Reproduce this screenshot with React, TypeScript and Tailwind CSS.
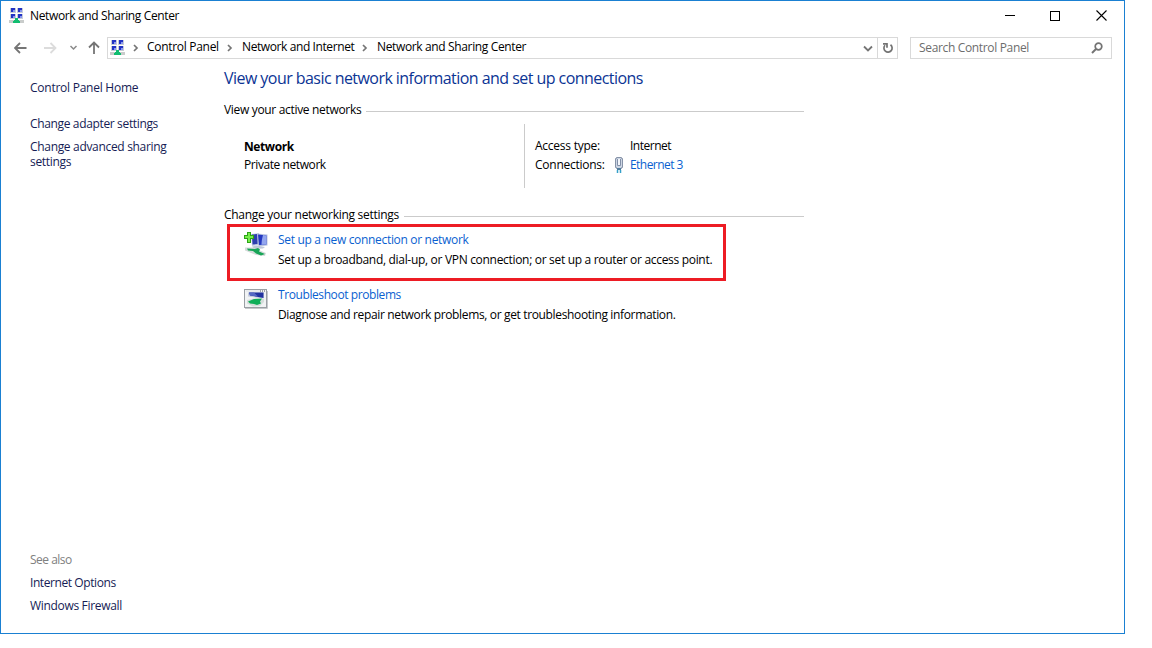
import type { ReactNode } from "react";

function NetworkIcon() {
  return (
    <svg width="16" height="16" viewBox="0 0 16 16" className="shrink-0">
      {[[1, 0], [8, 0], [1, 6], [8, 6]].map(([x, y]) => (
        <g key={`${x}-${y}`}>
          <rect x={x} y={y} width="6" height="5" fill="#c9cdd6" />
          <rect x={x + 1} y={y} width="4" height="4" fill="#2233c4" />
          <rect x={x + 3} y={y + 2} width="2" height="2" fill="#8797ee" />
        </g>
      ))}
      <rect x="0" y="12" width="15" height="3" fill="#c9cccb" />
      <path d="M6 10h3v2h1v1h1v2H4v-2h1v-1h1z" fill="#11bd70" />
    </svg>
  );
}

function Chevron({ className = "" }: { className?: string }) {
  return (
    <svg width="6" height="8" viewBox="0 0 6 8" className={`shrink-0 ${className}`}>
      <path d="M1 1l3 3-3 3" fill="none" stroke="#757575" strokeWidth="1.7" />
    </svg>
  );
}

function SetupIcon() {
  return (
    <svg width="26" height="26" viewBox="0 0 26 26" className="shrink-0">
      <path d="M8 3l8-1v12l-7 1z" fill="#c3cce2" />
      <path d="M9 3.500l5.500-.5v10l-5 .5z" fill="#2c3ead" />
      <path d="M14 2.500l10.500 1v11l-9 1z" fill="#b9c4df" />
      <path d="M15 3.500l8.500 1v9l-7.500.5z" fill="#2438c0" />
      <path d="M20 4.100l3.500.4v9l-5 .3c0-3 .5-6 1.500-9.700z" fill="#93a6ee" />
      <path d="M9 15.500l5-1 8 1.500-2 1.500-9 .5z" fill="#bfc8d8" />
      <path d="M2 16.500l8 0 13 5.500-1 3-9-1-11-4.500z" fill="#d5dbda" />
      <path d="M4 17.500l8 .5 3-1 2 1.500-1 2 6 2.500-4 1.500-5-2-3-2.500-5-.5z" fill="#18a557" />
      <path d="M4 1h4v3h3v4H8v4H4V8H1V4h3z" fill="#2da415" />
      <path d="M5 2h2v3h3v2H7v4H5V7H2V5h3z" fill="#76ed4c" />
    </svg>
  );
}

function TroubleshootIcon() {
  return (
    <svg width="24" height="20" viewBox="0 0 24 20">
      <rect x=".5" y=".5" width="22" height="18" fill="#f1f3f4" stroke="#9a9fa4" />
      <path d="M1 19.5h22.5V2" fill="none" stroke="#c6c9cc" />
      <path d="M2 2h14" stroke="#dfe2e5" />
      <path d="M16 2h1M18 2h1M20 2h1" stroke="#4d535c" />
      <path d="M4 3.500h16l-.5 6L4 7.500z" fill="#c6cede" />
      <path d="M5 3.500h14.500v5.500L6 6.500z" fill="#22339f" />
      <path d="M5 3.500h5l4 4-8-1z" fill="#5468c4" />
      <path d="M3 11l7-1.500 10 .5v3l-4 4-7 .5-6-3z" fill="#d5dddb" />
      <path d="M4 12.500l6-2.500 8-.5-2 3 1 2-4 1.500-3-1-4-.5z" fill="#0fae58" />
    </svg>
  );
}

function EthernetIcon() {
  return (
    <svg width="10" height="16" viewBox="0 0 10 16">
      <path d="M1.5 1.5h1v-1h5v1h1v9h-1v1h-5v-1h-1z" fill="#cdd6e4" stroke="#8693a8" />
      <path d="M3.5 2v6.500h3V2" fill="#f3f6fb" stroke="#8390a8" />
      <path d="M3 11h4v2H3z" fill="#517d9c" />
      <path d="M3.500 13v3M6.500 13v3" stroke="#36a0c9" strokeWidth="1.500" />
    </svg>
  );
}

function SectionTitle({ children }: { children: ReactNode }) {
  return (
    <div className="flex h-4 w-[580px] items-center">
      <span>{children}</span>
      <span className="mt-[3px] ml-[5px] h-px flex-1 bg-[#cbcbcb]" />
    </div>
  );
}

function TitleBar() {
  return (
    <header className="flex h-[30px] items-center pl-2">
      <NetworkIcon />
      <span className="ml-[5px] tracking-[-0.36px]">Network and Sharing Center</span>
      <div className="mr-[17px] mb-px ml-auto flex items-center">
        <svg width="10" height="11" viewBox="0 0 10 11" shapeRendering="crispEdges">
          <path d="M0 5.500h10" stroke="#000" />
        </svg>
        <svg width="10" height="10" viewBox="0 0 10 10" className="ml-[35px]" shapeRendering="crispEdges">
          <rect x=".5" y=".5" width="9" height="9" fill="none" stroke="#000" />
        </svg>
        <svg width="11" height="11" viewBox="0 0 11 11" className="ml-[36px]">
          <path d="M.5.5l10 10M10.500.5l-10 10" stroke="#000" strokeWidth="1.1" />
        </svg>
      </div>
    </header>
  );
}

function AddressBar() {
  return (
    <nav className="flex h-[34px] items-center pl-[13px]">
      <svg width="88" height="16" viewBox="0 0 88 16" fill="none" strokeWidth="1.8">
        <path d="M12.500 8H1M6 3L1 8l5 5" stroke="#757575" />
        <path d="M30 8h11.500M36.500 3l5 5-5 5" stroke="#dcdcdc" />
        <path d="M56.500 6l3 3 3-3" stroke="#8a8a8a" strokeWidth="1.500" />
        <path d="M80 14V2.500M75 7.500l5-5 5 5" stroke="#757575" />
      </svg>
      <div className="ml-[5px] flex h-[22px] w-[791px] items-center border border-[#d9d9d9] pl-[2px] tracking-[-0.36px] whitespace-nowrap">
        <NetworkIcon />
        <Chevron className="ml-[7px]" />
        <span className="mb-[2px] ml-2 w-[73px] tracking-[-0.3px]">Control Panel</span>
        <Chevron className="ml-[7px]" />
        <span className="mb-[2px] ml-[9px] w-[113px] tracking-[-0.4px]">Network and Internet</span>
        <Chevron className="ml-[7px]" />
        <span className="mb-[2px] ml-[9px]">Network and Sharing Center</span>
        <svg width="10" height="8" viewBox="0 0 10 8" className="mt-[2px] mr-[4px] ml-auto">
          <path d="M1 1.500l4 4 4-4" fill="none" stroke="#757575" strokeWidth="1.800" />
        </svg>
        <div className="flex h-full w-5 items-center justify-center border-l border-[#d9d9d9]">
          <svg width="12" height="12" viewBox="0 0 12 12" fill="none" stroke="#737373" strokeWidth="1.700">
            <path d="M8.500 2.800A4.100 4.100 0 1 1 3 3.300" />
            <path d="M1 1.800h4v4" />
          </svg>
        </div>
      </div>
      <div className="ml-3 flex h-[22px] w-[202px] items-center justify-between border border-[#d9d9d9] pr-2 pl-2 text-[#6d6d6d]">
        <span className="tracking-[-0.34px]">Search Control Panel</span>
        <svg width="12" height="12" viewBox="0 0 12 12" fill="none" stroke="#737373">
          <circle cx="7.500" cy="4.500" r="3.300" strokeWidth="1.700" />
          <path d="M5 7l-4 4" strokeWidth="2" />
        </svg>
      </div>
    </nav>
  );
}

function Sidebar() {
  return (
    <aside className="flex w-[223px] flex-col pt-[15px] pb-[19px] pl-[29px] text-[#151c55]">
      <a className="tracking-[-0.25px]">Control Panel Home</a>
      <a className="mt-5 tracking-[-0.35px]">Change adapter settings</a>
      <a className="mt-[7px] w-[150px] leading-[15px]">Change advanced sharing settings</a>
      <div className="mt-auto flex flex-col gap-[7px]">
        <span className="tracking-[-0.5px] text-[#808080]">See also</span>
        <a className="tracking-[-0.42px]">Internet Options</a>
        <a>Windows Firewall</a>
      </div>
    </aside>
  );
}

function Content() {
  return (
    <main className="pt-[3px]">
      <h1 className="h-5 text-[16px] leading-5 tracking-[-0.55px] whitespace-nowrap text-[#0b3494]">
        View your basic network information and set up connections
      </h1>
      <div className="mt-[14px]">
        <SectionTitle>View your active networks</SectionTitle>
      </div>
      <section className="mt-[6px] flex h-16 pl-5">
        <div className="w-[280px] pt-[14px]">
          <div className="h-[18px] leading-[18px] font-bold tracking-[-0.4px]">Network</div>
          <div className="h-[18px] leading-[18px] tracking-[-0.42px]">Private network</div>
        </div>
        <div className="border-l border-[#cbcbcb] pt-3 pl-[10px]">
          <div className="flex h-[19px] items-center">
            <span className="w-[95px] tracking-[-0.25px]">Access type:</span>
            <span className="tracking-[-0.5px]">Internet</span>
          </div>
          <div className="flex h-[19px] items-center">
            <span className="w-[79px] tracking-[-0.25px]">Connections:</span>
            <EthernetIcon />
            <a className="ml-[6px] tracking-[-0.55px] text-[#0a5fd0]">Ethernet 3</a>
          </div>
        </div>
      </section>
      <div className="mt-[19px] tracking-[-0.28px]">
        <SectionTitle>Change your networking settings</SectionTitle>
      </div>
      <section className="mt-[1px] ml-[3px] flex h-[57px] w-[499px] border-[3px] border-[#ed1c24] pt-1 pl-[13px]">
        <SetupIcon />
        <div className="ml-[9px] pt-px">
          <a className="block text-[#0a5fd0]">Set up a new connection or network</a>
          <p className="mt-1 tracking-[-0.31px] whitespace-nowrap">
            Set up a broadband, dial-up, or VPN connection; or set up a router or access point.
          </p>
        </div>
      </section>
      <section className="mt-[6px] flex pl-5">
        <div className="w-[34px] pt-[2px]">
          <TroubleshootIcon />
        </div>
        <div>
          <a className="block tracking-[-0.41px] text-[#0a5fd0]">Troubleshoot problems</a>
          <p className="mt-1 tracking-[-0.35px]">
            Diagnose and repair network problems, or get troubleshooting information.
          </p>
        </div>
      </section>
    </main>
  );
}

export default function App() {
  return (
    <div className="h-[648px] w-[1152px] overflow-hidden bg-white font-['Open_Sans','Noto_Sans',sans-serif] text-[12px] leading-4 tracking-[-0.32px] text-black">
      <div className="flex h-[634px] w-[1125px] flex-col border border-[#1a80d2]">
        <TitleBar />
        <AddressBar />
        <div className="flex min-h-0 flex-1">
          <Sidebar />
          <Content />
        </div>
      </div>
    </div>
  );
}
